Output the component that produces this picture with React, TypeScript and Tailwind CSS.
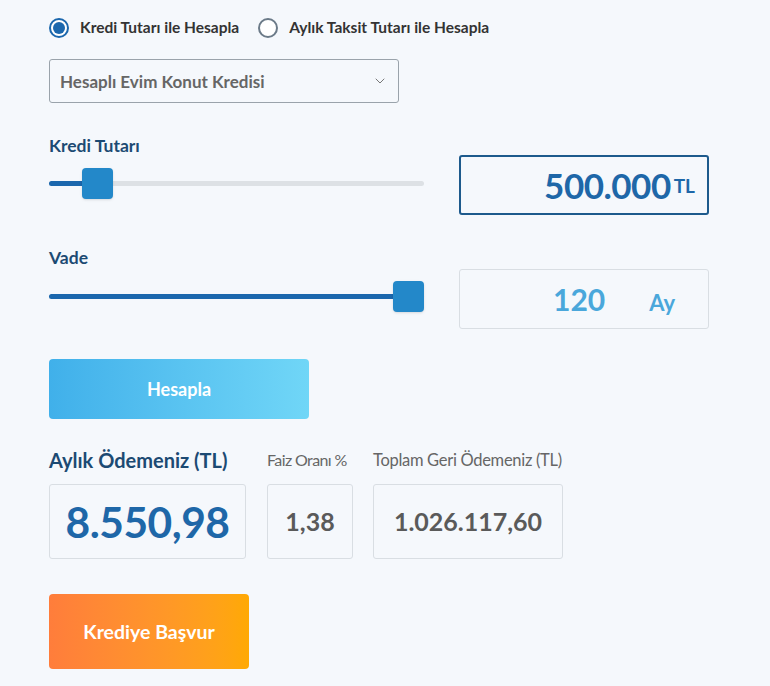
import { ChevronDown } from "lucide-react";

function Radio({ checked, label }: { checked?: boolean; label: string }) {
  return (
    <label className="flex items-center gap-[11px] cursor-pointer">
      <span
        className={
          "w-[20px] h-[20px] rounded-full flex items-center justify-center border-2 " +
          (checked ? "border-[#1b67ad] bg-white" : "border-[#6b7a88] bg-white")
        }
      >
        {checked && <span className="w-[12px] h-[12px] rounded-full bg-[#1b67ad]" />}
      </span>
      <span className="text-[15.5px] font-bold text-[#333]">{label}</span>
    </label>
  );
}

function Slider({ percent }: { percent: number }) {
  return (
    <div className="relative w-[375px] h-[32px] flex items-center">
      <div className="w-full h-[5px] bg-[#dde1e5] rounded-full" />
      <div
        className="absolute left-0 h-[5px] bg-[#1b67ad] rounded-full"
        style={{ width: `${percent}%` }}
      />
      <div
        className="absolute w-[31px] h-[31px] bg-[#2388c9] rounded-[4px] shadow-sm"
        style={{ left: `calc(${percent}% - ${(percent / 100) * 31}px)` }}
      />
    </div>
  );
}

export default function App() {
  return (
    <div
      className="min-h-[686px] w-[770px] bg-[#f5f8fc] pl-[49px] pt-[16px]"
      style={{ fontFamily: "Lato, 'Open Sans', sans-serif" }}
    >
      <div className="flex items-center gap-[19px]">
        <Radio checked label="Kredi Tutarı ile Hesapla" />
        <Radio label="Aylık Taksit Tutarı ile Hesapla" />
      </div>

      <div className="mt-[20px] w-[350px] h-[44px] border border-[#9aa3ab] rounded-[3px] bg-[#f5f8fc] flex items-center justify-between pl-[10px] pr-[10px]">
        <span className="text-[17px] font-bold text-[#666]">Hesaplı Evim Konut Kredisi</span>
        <ChevronDown className="w-[16px] h-[16px] text-[#777]" strokeWidth={1.5} />
      </div>

      <div className="mt-[32px] flex items-start">
        <div className="flex flex-col">
          <span className="text-[17.5px] font-bold text-[#1c4a73] leading-[22px]">Kredi Tutarı</span>
          <div className="mt-[10px]">
            <Slider percent={9.6} />
          </div>
        </div>
        <div className="ml-[35px] mt-[20px] w-[250px] h-[60px] border-2 border-[#1d5a8c] rounded-[3px] flex items-center justify-end pr-[12px] gap-[3px]">
          <span className="text-[35px] font-bold text-[#1e67a8] tracking-[-0.5px]">500.000</span>
          <span className="text-[19px] font-bold text-[#1e67a8] mt-[2px]">TL</span>
        </div>
      </div>

      <div className="mt-[32px] flex items-start">
        <div className="flex flex-col">
          <span className="text-[17.5px] font-bold text-[#1c4a73] leading-[22px]">Vade</span>
          <div className="mt-[11px]">
            <Slider percent={100} />
          </div>
        </div>
        <div className="ml-[35px] mt-[22px] w-[250px] h-[60px] border border-[#d9dee3] rounded-[3px] flex items-center">
          <span className="ml-[93px] text-[30px] font-bold text-[#4aa7db]">120</span>
          <span className="ml-[44px] mt-[6px] text-[22px] font-bold text-[#4aa7db]">Ay</span>
        </div>
      </div>

      <button className="mt-[30px] w-[260px] h-[60px] rounded-[4px] bg-gradient-to-r from-[#40b0ea] to-[#70d6f7] text-white text-[18px] font-bold">
        Hesapla
      </button>

      <div className="mt-[29px] flex items-end">
        <div className="flex flex-col">
          <span className="text-[20px] font-bold text-[#1c4a73] leading-[24px]">Aylık Ödemeniz (TL)</span>
          <div className="mt-[12px] w-[197px] h-[75px] border border-[#d9dee3] rounded-[3px] flex items-center justify-center">
            <span className="text-[42.5px] font-bold text-[#1e67a8] tracking-[-0.5px]">8.550,98</span>
          </div>
        </div>
        <div className="ml-[21px] flex flex-col">
          <span className="text-[16px] text-[#666] leading-[20px] tracking-[-0.6px]">Faiz Oranı %</span>
          <div className="mt-[14px] w-[86px] h-[75px] border border-[#d9dee3] rounded-[3px] flex items-center justify-center">
            <span className="text-[25px] font-bold text-[#5a5a5a]">1,38</span>
          </div>
        </div>
        <div className="ml-[20px] flex flex-col">
          <span className="text-[16.5px] text-[#666] leading-[20px] tracking-[-0.3px]">Toplam Geri Ödemeniz (TL)</span>
          <div className="mt-[14px] w-[190px] h-[75px] border border-[#d9dee3] rounded-[3px] flex items-center justify-center">
            <span className="text-[25px] font-bold text-[#5a5a5a]">1.026.117,60</span>
          </div>
        </div>
      </div>

      <button className="mt-[35px] w-[200px] h-[75px] rounded-[4px] bg-gradient-to-r from-[#ff7d3b] to-[#ffa903] text-white text-[19.5px] font-bold">
        Krediye Başvur
      </button>
    </div>
  );
}
